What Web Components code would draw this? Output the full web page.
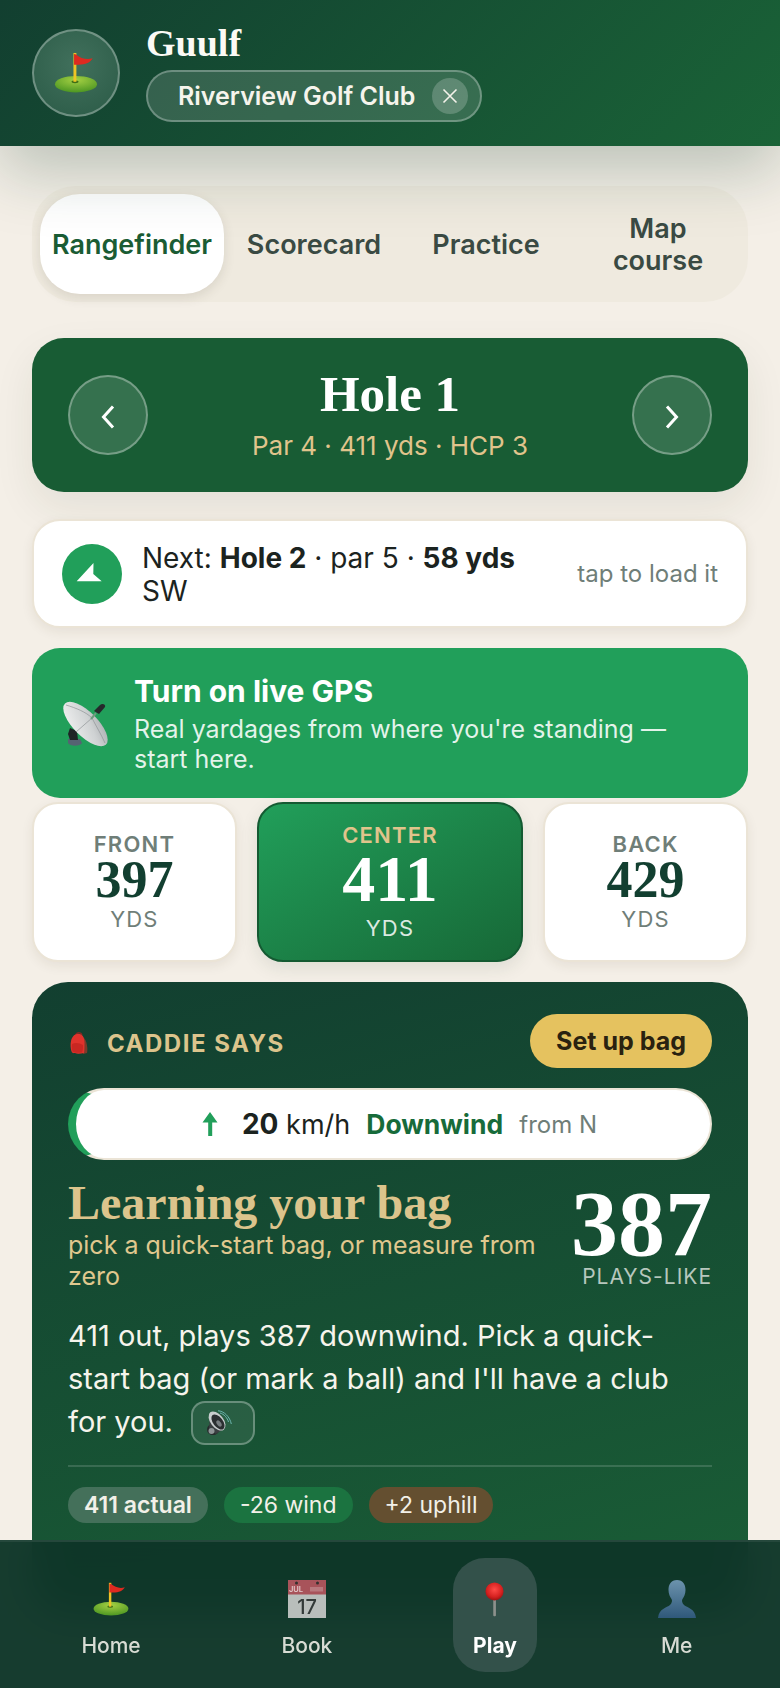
<!DOCTYPE html>
<html lang="en">
<head>
<meta charset="utf-8">
<title>Guulf</title>
<style>
	html, body { margin: 0; padding: 0; background: #f4efe7; }
	body { font-family: Inter, "Liberation Sans", sans-serif; color: #1b2320; }
	g-main > * { flex: none; }
</style>
</head>
<body>

<g-app>
	<g-header slot="header" title="Guulf" club="Riverview Golf Club"></g-header>
	<g-main>
		<g-tabs>
			<g-tab active>Rangefinder</g-tab>
			<g-tab>Scorecard</g-tab>
			<g-tab>Practice</g-tab>
			<g-tab>Map course</g-tab>
		</g-tabs>
		<g-hole-card title="Hole 1" info="Par 4 · 411 yds · HCP 3"></g-hole-card>
		<g-next-card>Next: <b>Hole 2</b> · par 5 · <b>58 yds</b> SW</g-next-card>
		<g-gps-banner title="Turn on live GPS">Real yardages from where you're standing — start here.</g-gps-banner>
		<g-distances></g-distances>
		<g-caddie-card></g-caddie-card>
	</g-main>
	<g-bottom-nav slot="nav">
		<g-nav-item icon="flag">Home</g-nav-item>
		<g-nav-item icon="calendar">Book</g-nav-item>
		<g-nav-item icon="pin" active>Play</g-nav-item>
		<g-nav-item icon="person">Me</g-nav-item>
	</g-bottom-nav>
</g-app>

<script>
const SERIF = '"Liberation Serif", "Times New Roman", serif';

const ICONS = {
	flag: `<svg viewBox="0 0 44 42" width="100%" height="100%">
		<defs>
			<radialGradient id="gr" cx="50%" cy="25%" r="75%"><stop offset="0" stop-color="#a4d043"/><stop offset="1" stop-color="#4c9622"/></radialGradient>
		</defs>
		<ellipse cx="22" cy="33" rx="21.500" ry="8.500" fill="url(#gr)"/>
		<ellipse cx="21" cy="30.500" rx="3.600" ry="1.400" fill="#3f6e16"/>
		<rect x="19.400" y="1" width="3" height="29.500" fill="#eec525"/>
		<path d="M20 2L22 2.500C27 6.500 33 8.500 39 6.500C36.500 11.500 31 13.500 22 13L20 13Z" fill="#dd2a20"/>
	</svg>`,
	calendar: `<svg viewBox="0 0 38 38" width="100%" height="100%">
		<rect width="38" height="38" fill="#b9bebb"/>
		<path d="M0 0H38V14.500H0Z" fill="#a8535a"/>
		<circle cx="8.500" cy="3" r="1.500" fill="#33302e"/><circle cx="29.500" cy="3" r="1.500" fill="#33302e"/>
		<text x="8" y="12" font-family="Inter, sans-serif" font-size="7.500" font-weight="600" fill="#e2c9c9" text-anchor="middle">JUL</text>
		<rect x="22" y="7" width="13" height="4.500" fill="#b9797e"/>
		<text x="19" y="34" font-family="Inter, sans-serif" font-size="20" fill="#333a38" text-anchor="middle">17</text>
	</svg>`,
	pin: `<svg viewBox="0 0 20 36" width="100%" height="100%">
		<defs><radialGradient id="p" cx="50%" cy="40%" r="60%"><stop offset="0" stop-color="#ff4a46"/><stop offset=".7" stop-color="#d4201f"/><stop offset="1" stop-color="#9a1413"/></radialGradient></defs>
		<rect x="8.700" y="17" width="2.800" height="18.500" rx="1" fill="#8d918c"/>
		<circle cx="10" cy="9.500" r="9.500" fill="url(#p)"/>
	</svg>`,
	person: `<svg viewBox="0 0 38 38" width="100%" height="100%">
		<defs><linearGradient id="u" x1="0" x2="0" y1="0" y2="1"><stop offset="0" stop-color="#6c93ad"/><stop offset="1" stop-color="#2f587a"/></linearGradient></defs>
		<path d="M19 0C13 0 10.500 4.500 10.500 10C10.500 14 12 17 13.500 19C14.500 20.500 14 23 12 25C9 27.500 1 28.500 0 38H38C37 28.500 29 27.500 26 25C24 23 23.500 20.500 24.500 19C26 17 27.500 14 27.500 10C27.500 4.500 25 0 19 0Z" fill="url(#u)"/>
	</svg>`,
	dish: `<svg viewBox="0 0 44 44" width="100%" height="100%">
		<defs><linearGradient id="d" x1="0" x2="1" y1="0" y2="1"><stop offset="0" stop-color="#f4f4f4"/><stop offset=".6" stop-color="#cfd2d3"/><stop offset="1" stop-color="#a2a6a9"/></linearGradient></defs>
		<path d="M4 37H16L18 41C16 44.500 6 44.500 4 41Z" fill="#566372"/>
		<path d="M6 26L13 29L14 38L6 38L4 32Z" fill="#1f2426"/>
		<ellipse cx="21.500" cy="22" rx="12" ry="29" transform="rotate(-45 21.500 22)" fill="url(#d)"/>
		<path d="M2 3C12 6 22 10 28 16M28 16C32 24 37 32 41 41M28 16L12 30" stroke="#8f9496" stroke-width=".7" fill="none"/>
		<path d="M27 17L32 11" stroke="#6d9a7e" stroke-width="2"/>
		<path d="M30 9L36 3C38 1 42 2 41 5L35 12Z" fill="#25292b"/>
	</svg>`,
	backpack: `<svg viewBox="0 0 18 22" width="100%" height="100%">
		<path d="M6 3C6 0 11 0 12 3" stroke="#7d2a24" stroke-width="1.300" fill="none"/>
		<path d="M13 5C17 8 18 17 17 21L13 22Z" fill="#7c3a2a"/>
		<path d="M7 2C12 1 14.500 5 14.500 11C14.500 16 14.500 19 14 21C10 22 5 22 2 20.500C0 16 0 8 3 4.500C4 3 5.500 2 7 2Z" fill="#e0332c"/>
		<path d="M2 12C5 10 10 11 13 13C13 16 13 18.500 12 20.500C8 21 5 21 2.500 19.500C1.800 17 1.500 14.500 2 12Z" fill="#c92722"/>
	</svg>`,
	speaker: `<svg viewBox="0 0 26 26" width="100%" height="100%">
		<path d="M12 .8C18 1 24 7 25.300 14" stroke="#6cb7b0" stroke-width="1" fill="none"/>
		<path d="M14 3C18 4 21.500 8 22.500 12" stroke="#6cb7b0" stroke-width="1" fill="none"/>
		<ellipse cx="7" cy="19.500" rx="6" ry="5.500" fill="#26292b"/>
		<path d="M4 5L19 18L10 24L3 20Z" fill="#3a3f41"/>
		<ellipse cx="11" cy="11" rx="6.500" ry="11" transform="rotate(-38 11 11)" fill="#c9cdce"/>
		<ellipse cx="12" cy="12" rx="4.800" ry="8.800" transform="rotate(-38 12 12)" fill="#2b2f31"/>
		<ellipse cx="13" cy="13.500" rx="2" ry="3.500" transform="rotate(-38 13 13.500)" fill="#777d80"/>
		<ellipse cx="5.500" cy="21" rx="3" ry="3" fill="#8e9496"/>
	</svg>`
};

class GIcon extends HTMLElement {
	constructor() {
		super();
		this.attachShadow({mode: 'open'});
	}

	connectedCallback() {
		this.shadowRoot.innerHTML = `
			<style>
				:host { display: block; flex: none; line-height: 0; }
				svg { display: block; overflow: visible; }
			</style>
			${ICONS[this.getAttribute('name')]}
		`;
	}
}

class GApp extends HTMLElement {
	constructor() {
		super();
		this.attachShadow({mode: 'open'});
		this.shadowRoot.innerHTML = `
			<style>
				:host {
					display: block;
					position: relative;
					height: 1688px;
					overflow: hidden;
					background: #f4efe7;
				}
				.top { position: relative; z-index: 2; }
				.over { position: absolute; left: 0; right: 0; bottom: 0; z-index: 3; }
			</style>
			<div class="top"><slot name="header"></slot></div>
			<slot></slot>
			<div class="over"><slot name="nav"></slot></div>
		`;
	}
}

class GHeader extends HTMLElement {
	constructor() {
		super();
		this.attachShadow({mode: 'open'});
	}

	connectedCallback() {
		this.shadowRoot.innerHTML = `
			<style>
				:host {
					display: flex;
					align-items: center;
					gap: 26px;
					height: 146px;
					box-sizing: border-box;
					padding: 0 32px;
					background: linear-gradient(135deg, #123f30 0%, #1a6337 100%);
					box-shadow: 0 24px 64px rgba(18, 63, 48, 0.26);
				}
				.avatar {
					width: 88px;
					height: 88px;
					box-sizing: border-box;
					border-radius: 50%;
					border: 2px solid rgba(255, 255, 255, 0.3);
					background: radial-gradient(circle at 50% 40%, #41705c 0%, #2a5a46 100%);
					display: flex;
					align-items: center;
					justify-content: center;
				}
				.avatar g-icon { width: 44px; height: 41px; margin-top: -2px; }
				.title {
					font: 700 38px/44px ${SERIF};
					color: #fbfaf5;
					margin-top: -4px;
				}
				.club {
					display: flex;
					align-items: center;
					width: 336px;
					height: 52px;
					box-sizing: border-box;
					margin-top: 5px;
					padding: 0 12px 0 30px;
					border-radius: 26px;
					border: 2px solid rgba(255, 255, 255, 0.28);
					background: rgba(255, 255, 255, 0.14);
					color: #f6f4ec;
					font-size: 25px;
					font-weight: 600;
					white-space: nowrap;
				}
				.close {
					margin-left: auto;
					width: 36px;
					height: 36px;
					border-radius: 50%;
					background: rgba(255, 255, 255, 0.2);
					display: flex;
					align-items: center;
					justify-content: center;
				}
			</style>
			<div class="avatar"><g-icon name="flag"></g-icon></div>
			<div>
				<div class="title">${this.getAttribute('title')}</div>
				<div class="club">
					<span>${this.getAttribute('club')}</span>
					<span class="close"><svg width="16" height="16" viewBox="0 0 16 16"><path d="M1.500 1.500L14.500 14.500M14.500 1.500L1.500 14.500" stroke="#f4f2ea" stroke-width="1.600"/></svg></span>
				</div>
			</div>
		`;
	}
}

class GMain extends HTMLElement {
	constructor() {
		super();
		this.attachShadow({mode: 'open'});
		this.shadowRoot.innerHTML = `
			<style>
				:host {
					display: flex;
					flex-direction: column;
					padding: 40px 32px 0;
				}
			</style>
			<slot></slot>
		`;
	}
}

class GTabs extends HTMLElement {
	constructor() {
		super();
		this.attachShadow({mode: 'open'});
		this.shadowRoot.innerHTML = `
			<style>
				:host {
					display: grid;
					grid-template-columns: 186px repeat(3, 1fr);
					column-gap: 4px;
					height: 116px;
					box-sizing: border-box;
					padding: 8px 6px 8px 8px;
					border-radius: 44px;
					background: #efeadf;
				}
			</style>
			<slot></slot>
		`;
	}
}

class GTab extends HTMLElement {
	constructor() {
		super();
		this.attachShadow({mode: 'open'});
		this.shadowRoot.innerHTML = `
			<style>
				:host {
					display: flex;
					align-items: center;
					justify-content: center;
					text-align: center;
					height: 100px;
					padding: 2px 10px 0;
					box-sizing: border-box;
					font-size: 27px;
					font-weight: 600;
					line-height: 32px;
					color: #3a4a43;
				}
				:host([active]) {
					width: 184px;
					background: #fff;
					color: #1a5c34;
					border-radius: 40px;
					box-shadow: 0 4px 12px rgba(60, 50, 30, 0.12);
				}
				span { display: block; }
				:host(:last-child) span { width: 100px; }
			</style>
			<span><slot></slot></span>
		`;
	}
}

class GHoleCard extends HTMLElement {
	constructor() {
		super();
		this.attachShadow({mode: 'open'});
	}

	connectedCallback() {
		this.shadowRoot.innerHTML = `
			<style>
				:host {
					display: flex;
					align-items: center;
					justify-content: space-between;
					height: 154px;
					box-sizing: border-box;
					margin-top: 36px;
					padding: 0 36px;
					border-radius: 32px;
					background: #185c34;
					box-shadow: 0 16px 40px rgba(40, 50, 30, 0.08);
				}
				.arrow {
					width: 80px;
					height: 80px;
					box-sizing: border-box;
					border-radius: 50%;
					border: 2px solid rgba(255, 255, 255, 0.32);
					background: rgba(255, 255, 255, 0.13);
					display: flex;
					align-items: center;
					justify-content: center;
					padding-top: 3px;
				}
				.mid { text-align: center; }
				h2 {
					margin: -1px 0 0;
					font: 700 51px/56px ${SERIF};
					color: #fff;
				}
				p {
					margin: 7px 0 0;
					font-size: 26px;
					line-height: 34px;
					color: #e0c48c;
				}
			</style>
			<div class="arrow"><svg width="16" height="24" viewBox="0 0 16 24"><path d="M13 1.500L3.500 12L13 22.500" fill="none" stroke="#fff" stroke-width="3"/></svg></div>
			<div class="mid">
				<h2>${this.getAttribute('title')}</h2>
				<p>${this.getAttribute('info')}</p>
			</div>
			<div class="arrow"><svg width="16" height="24" viewBox="0 0 16 24"><path d="M3 1.500L12.500 12L3 22.500" fill="none" stroke="#fff" stroke-width="3"/></svg></div>
		`;
	}
}

class GNextCard extends HTMLElement {
	constructor() {
		super();
		this.attachShadow({mode: 'open'});
		this.shadowRoot.innerHTML = `
			<style>
				:host {
					display: flex;
					align-items: center;
					gap: 20px;
					height: 109px;
					box-sizing: border-box;
					margin-top: 27px;
					padding: 0 28px;
					border-radius: 28px;
					border: 2px solid #ebe4d6;
					background: #fff;
					box-shadow: 0 4px 12px rgba(60, 50, 30, 0.08);
				}
				.dot {
					flex: none;
					width: 60px;
					height: 60px;
					border-radius: 50%;
					background: #219f5a;
				}
				.dot svg { display: block; }
				.text {
					flex: 1;
					font-size: 28px;
					line-height: 33px;
					margin-top: 3px;
					color: #1b2320;
				}
				.hint {
					flex: none;
					font-size: 24px;
					color: #6f7e78;
				}
			</style>
			<div class="dot"><svg width="60" height="60" viewBox="0 0 60 60"><path d="M31.500 19L14.700 37.300H39.700L31.300 30Z" fill="#fff"/></svg></div>
			<div class="text"><slot></slot></div>
			<div class="hint">tap to load it</div>
		`;
	}
}

class GGpsBanner extends HTMLElement {
	constructor() {
		super();
		this.attachShadow({mode: 'open'});
	}

	connectedCallback() {
		this.shadowRoot.innerHTML = `
			<style>
				:host {
					display: flex;
					align-items: center;
					gap: 26px;
					height: 150px;
					box-sizing: border-box;
					margin-top: 20px;
					padding: 0 32px;
					border-radius: 28px;
					background: #219f5a;
					color: #fff;
				}
				g-icon { width: 44px; height: 44px; margin-top: 2px; }
				.title { font-size: 30px; font-weight: 700; line-height: 36px; }
				.desc {
					font-size: 25px;
					line-height: 30px;
					margin-top: 5px;
					color: rgba(255, 255, 255, 0.88);
				}
			</style>
			<g-icon name="dish"></g-icon>
			<div>
				<div class="title">${this.getAttribute('title')}</div>
				<div class="desc"><slot></slot></div>
			</div>
		`;
	}
}

class GDistances extends HTMLElement {
	constructor() {
		super();
		this.attachShadow({mode: 'open'});
		this.shadowRoot.innerHTML = `
			<style>
				:host {
					display: grid;
					grid-template-columns: 1fr 1.3fr 1fr;
					gap: 20px;
					height: 160px;
					margin-top: 4px;
				}
			</style>
			<g-distance label="FRONT" value="397"></g-distance>
			<g-distance label="CENTER" value="411" center></g-distance>
			<g-distance label="BACK" value="429"></g-distance>
		`;
	}
}

class GDistance extends HTMLElement {
	constructor() {
		super();
		this.attachShadow({mode: 'open'});
	}

	connectedCallback() {
		this.shadowRoot.innerHTML = `
			<style>
				:host {
					display: flex;
					flex-direction: column;
					align-items: center;
					justify-content: center;
					box-sizing: border-box;
					border-radius: 26px;
					border: 2px solid #ebe4d6;
					background: #fff;
					box-shadow: 0 4px 12px rgba(60, 50, 30, 0.08);
				}
				:host([center]) {
					border-color: #145a32;
					background: linear-gradient(150deg, #219f5a 0%, #176837 100%);
					box-shadow: 0 6px 18px rgba(30, 60, 40, 0.1);
				}
				.label {
					font-size: 22px;
					font-weight: 600;
					letter-spacing: 1.200px;
					line-height: 26px;
					color: #6f7e78;
				}
				.value {
					font: 700 52px/46px ${SERIF};
					color: #123f30;
				}
				.unit {
					font-size: 22px;
					letter-spacing: 1.200px;
					line-height: 28px;
					margin-top: 2px;
					color: #6f7e78;
				}
				:host([center]) .label { color: #e0c48c; }
				:host([center]) .value { font-size: 66px; line-height: 58px; margin-top: 2px; color: #fff; }
				:host([center]) .unit { color: rgba(255, 255, 255, 0.85); margin-top: 6px; }
			</style>
			<div class="label">${this.getAttribute('label')}</div>
			<div class="value">${this.getAttribute('value')}</div>
			<div class="unit">YDS</div>
		`;
	}
}

class GWindBar extends HTMLElement {
	constructor() {
		super();
		this.attachShadow({mode: 'open'});
		this.shadowRoot.innerHTML = `
			<style>
				:host {
					display: flex;
					align-items: center;
					justify-content: center;
					height: 72px;
					box-sizing: border-box;
					padding-left: 12px;
					border-radius: 36px;
					border: 2px solid #ebe4d6;
					border-left: 8px solid #219f5a;
					background: #fff;
					font-size: 27px;
					color: #1b2320;
				}
				svg { display: block; margin-right: 23px; }
				b.speed { font-size: 28px; font-weight: 700; }
				.dir { color: #176b3a; font-size: 26.500px; font-weight: 700; margin-left: 16px; }
				.from { color: #6f7e78; font-size: 24px; margin-left: 16px; }
			</style>
			<svg width="18" height="26" viewBox="0 0 18 26"><path d="M9 1L16.500 11.500H11.200V25H7.200V11.500H1.500Z" fill="#219f5a"/></svg>
			<span><b class="speed">20</b> km/h</span>
			<span class="dir">Downwind</span>
			<span class="from">from N</span>
		`;
	}
}

class GChip extends HTMLElement {
	constructor() {
		super();
		this.attachShadow({mode: 'open'});
		this.shadowRoot.innerHTML = `
			<style>
				:host {
					display: flex;
					align-items: center;
					height: 36px;
					padding: 0 16px;
					border-radius: 18px;
					font-size: 23px;
					color: #f2f0e8;
					background: var(--chip-bg, #44705a);
				}
			</style>
			<slot></slot>
		`;
	}
}

class GCaddieCard extends HTMLElement {
	constructor() {
		super();
		this.attachShadow({mode: 'open'});
		this.shadowRoot.innerHTML = `
			<style>
				:host {
					display: block;
					margin-top: 20px;
					padding: 32px 36px 90px;
					border-radius: 36px;
					background: linear-gradient(165deg, #123f30 0%, #1a5e36 100%);
					color: #fff;
				}
				.head {
					display: flex;
					align-items: center;
					height: 54px;
				}
				.head g-icon { width: 18px; height: 22px; margin: 4px 19px 0 2px; }
				.says {
					font-size: 24px;
					font-weight: 700;
					letter-spacing: 1.500px;
					color: #dcc48c;
					margin-top: 4px;
				}
				.bag {
					margin-left: auto;
					display: flex;
					align-items: center;
					justify-content: center;
					width: 182px;
					height: 54px;
					border-radius: 27px;
					background: #e5c25f;
					color: #2a2210;
					font-size: 25px;
					font-weight: 700;
				}
				g-wind-bar { margin-top: 20px; }
				.read {
					display: flex;
					justify-content: space-between;
					margin-top: 16px;
				}
				.read h3 {
					margin: 0;
					font: 700 48px/54px ${SERIF};
					color: #dcc48c;
				}
				.read p {
					margin: 0;
					font-size: 25px;
					line-height: 31px;
					color: #e0c88e;
				}
				.score { flex: none; text-align: right; margin-left: 26px; }
				.score .n { font: 700 94px/88px ${SERIF}; color: #fff; margin: 3px 0 -3px; }
				.score .l {
					font-size: 21px;
					letter-spacing: 1px;
					line-height: 26px;
					color: #b7c7bd;
				}
				.msg {
					margin: 22px 0 0;
					font-size: 29px;
					line-height: 43px;
					color: #f6f4ec;
				}
				.say {
					display: inline-flex;
					align-items: center;
					justify-content: center;
					vertical-align: middle;
					width: 64px;
					height: 44px;
					box-sizing: border-box;
					margin: -2px 0 0 10px;
					border-radius: 14px;
					border: 2px solid rgba(255, 255, 255, 0.3);
					background: rgba(255, 255, 255, 0.08);
				}
				.say g-icon { width: 26px; height: 26px; margin-right: 8px; }
				hr {
					margin: 20px 0 0;
					border: 0;
					height: 2px;
					background: rgba(255, 255, 255, 0.15);
				}
				.chips { display: flex; gap: 16px; margin-top: 20px; }
				.chips .first { font-weight: 600; }
			</style>
			<div class="head">
				<g-icon name="backpack"></g-icon>
				<span class="says">CADDIE SAYS</span>
				<span class="bag">Set up bag</span>
			</div>
			<g-wind-bar></g-wind-bar>
			<div class="read">
				<div>
					<h3>Learning your bag</h3>
					<p>pick a quick-start bag, or measure from zero</p>
				</div>
				<div class="score">
					<div class="n">387</div>
					<div class="l">PLAYS-LIKE</div>
				</div>
			</div>
			<p class="msg">411 out, plays 387 downwind. Pick a quick-start bag (or mark a ball) and I'll have a club for you. <span class="say"><g-icon name="speaker"></g-icon></span></p>
			<hr>
			<div class="chips">
				<g-chip class="first">411 actual</g-chip>
				<g-chip style="--chip-bg: #1b7340">-26 wind</g-chip>
				<g-chip style="--chip-bg: #644f30">+2 uphill</g-chip>
			</div>
		`;
	}
}

class GBottomNav extends HTMLElement {
	constructor() {
		super();
		this.attachShadow({mode: 'open'});
		this.shadowRoot.innerHTML = `
			<style>
				:host {
					display: flex;
					justify-content: space-around;
					align-items: center;
					height: 148px;
					box-sizing: border-box;
					padding: 0 14px 0 11px;
					border-top: 2px solid #25483c;
					background: rgba(14, 54, 40, 0.97);
					-webkit-backdrop-filter: blur(18px);
					backdrop-filter: blur(18px);
				}
			</style>
			<slot></slot>
		`;
	}
}

class GNavItem extends HTMLElement {
	constructor() {
		super();
		this.attachShadow({mode: 'open'});
	}

	connectedCallback() {
		this.shadowRoot.innerHTML = `
			<style>
				:host {
					display: flex;
					flex-direction: column;
					align-items: center;
					justify-content: flex-start;
					height: 114px;
					box-sizing: border-box;
					padding: 22px 20px 0;
					border-radius: 32px;
					font-size: 21px;
					font-weight: 500;
					color: #d8dcd4;
				}
				:host([active]) {
					background: #33514a;
					color: #fff;
					font-weight: 700;
				}
				.slot { height: 38px; display: flex; align-items: center; justify-content: center; }
				.flag { width: 36px; height: 34px; }
				.calendar { width: 38px; height: 38px; }
				.pin { width: 19px; height: 35px; }
				.person { width: 38px; height: 38px; }
				.label { margin-top: 14px; line-height: 28px; }
			</style>
			<div class="slot"><g-icon class="${this.getAttribute('icon')}" name="${this.getAttribute('icon')}"></g-icon></div>
			<div class="label"><slot></slot></div>
		`;
	}
}

customElements.define('g-icon', GIcon);
customElements.define('g-app', GApp);
customElements.define('g-header', GHeader);
customElements.define('g-main', GMain);
customElements.define('g-tabs', GTabs);
customElements.define('g-tab', GTab);
customElements.define('g-hole-card', GHoleCard);
customElements.define('g-next-card', GNextCard);
customElements.define('g-gps-banner', GGpsBanner);
customElements.define('g-distances', GDistances);
customElements.define('g-distance', GDistance);
customElements.define('g-wind-bar', GWindBar);
customElements.define('g-chip', GChip);
customElements.define('g-caddie-card', GCaddieCard);
customElements.define('g-bottom-nav', GBottomNav);
customElements.define('g-nav-item', GNavItem);
</script>
</body>
</html>
